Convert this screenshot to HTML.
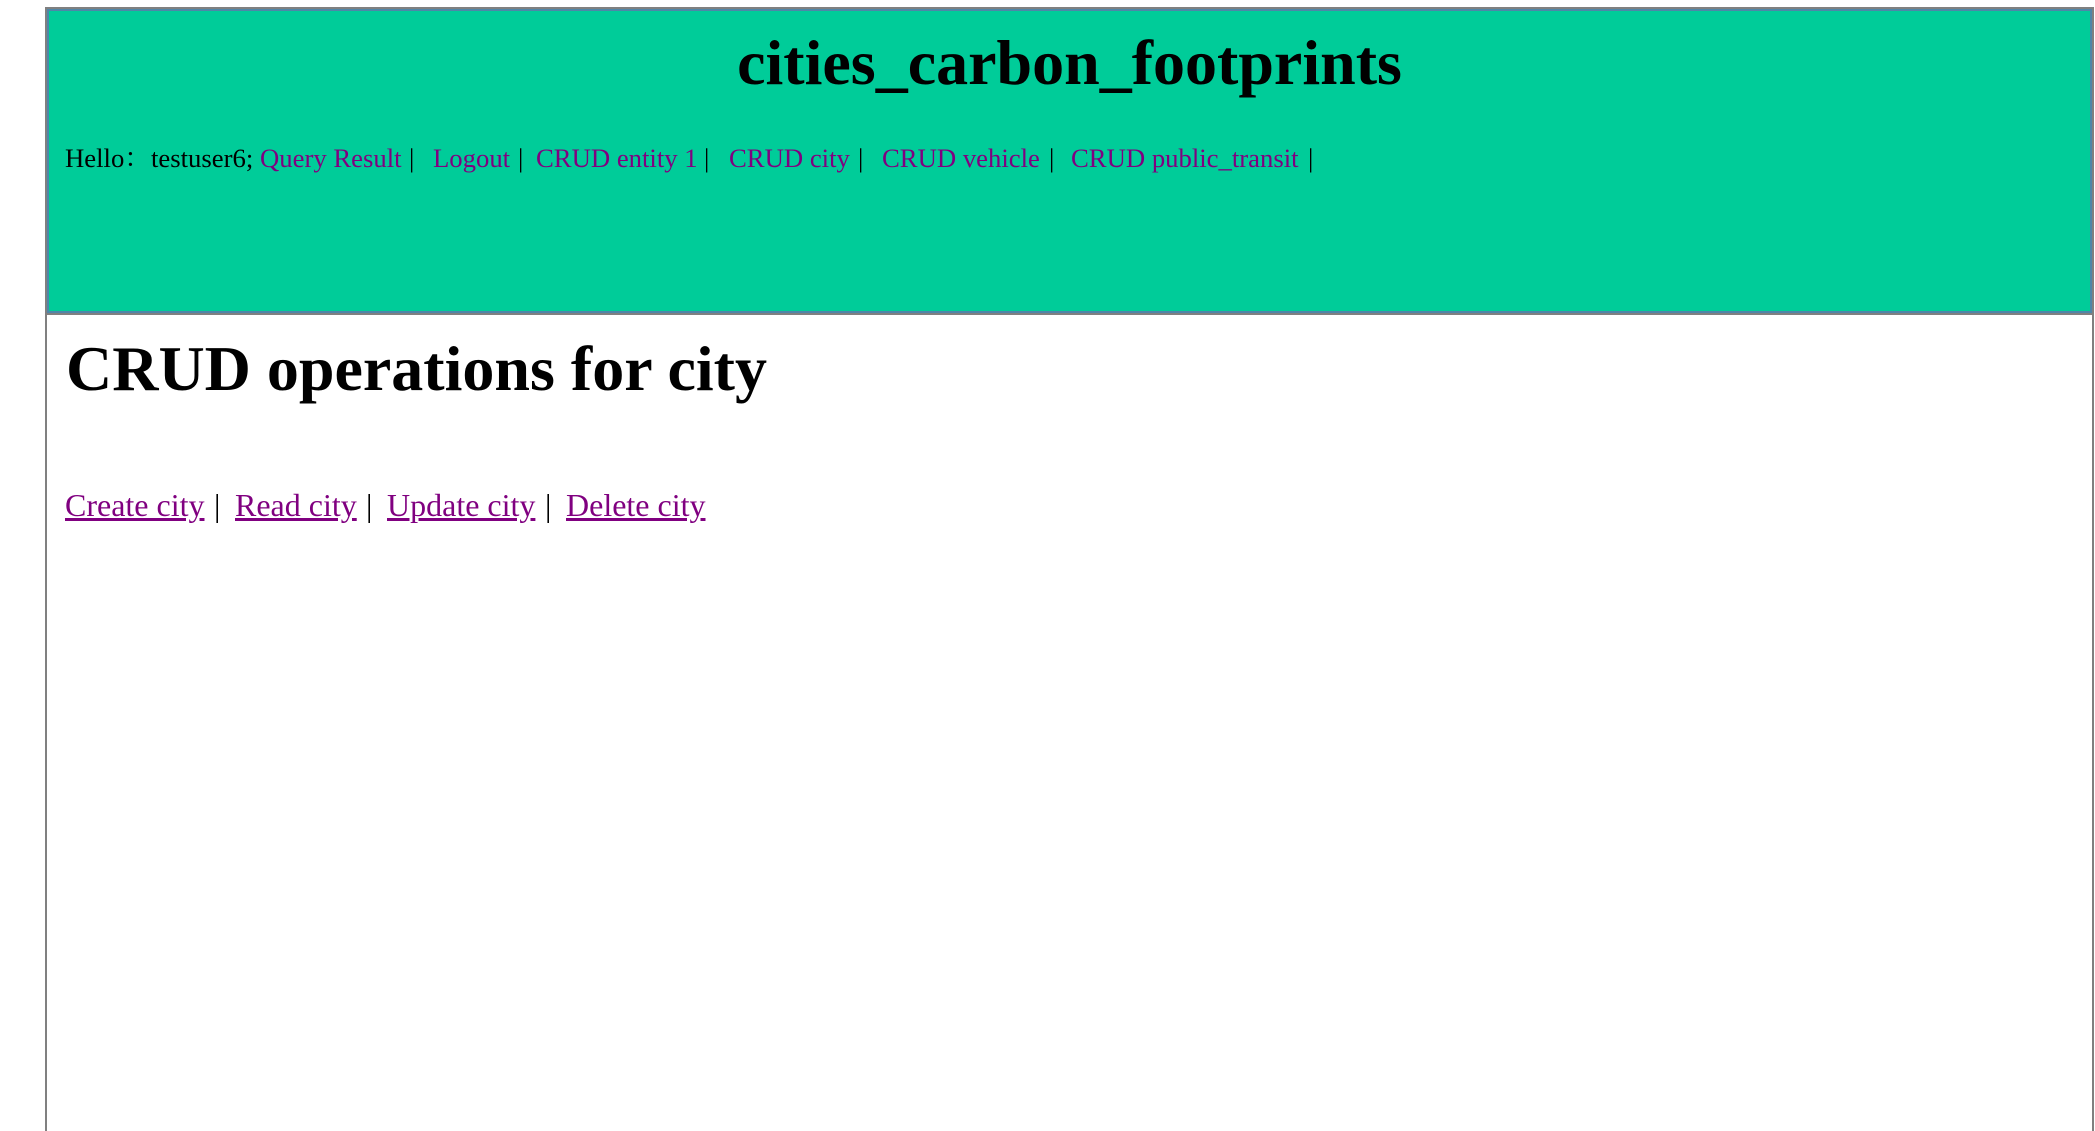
<!DOCTYPE html>
<html><head><meta charset="utf-8"><style>
html,body{margin:0;padding:0;background:#fff;width:2095px;height:1131px;overflow:hidden;position:relative;font-family:"Liberation Serif","Noto Serif CJK SC",serif;}
.hdr{position:absolute;left:45px;top:7px;width:2045px;height:304px;background:#00CC99;border:2px solid #808080;box-shadow:inset 0 0 0 2px #4f86a8;}
.vl{position:absolute;top:313px;width:2px;height:818px;background:#808080;}
.t{position:absolute;line-height:1;white-space:pre;}
a{color:#800080;text-decoration:none;}
.u{text-decoration:underline;}
</style></head><body>
<div class="hdr"></div>
<div class="vl" style="left:45px"></div>
<div class="vl" style="left:2092px"></div>
<div class="t" style="left:0;width:2139px;text-align:center;top:31px;font-size:64px;font-weight:bold">cities_carbon_footprints</div>

<div class="t" style="left:65px;top:145px;font-size:26.7px">Hello：</div>
<div class="t" style="left:151px;top:145px;font-size:26.7px">testuser6;</div>
<div class="t" style="left:260px;top:145px;font-size:26.7px"><a>Query Result</a></div>
<div class="t" style="left:409px;top:145px;font-size:26.7px">|</div>
<div class="t" style="left:433px;top:145px;font-size:26.7px"><a>Logout</a></div>
<div class="t" style="left:518px;top:145px;font-size:26.7px">|</div>
<div class="t" style="left:536px;top:145px;font-size:26.7px"><a>CRUD entity 1</a></div>
<div class="t" style="left:704px;top:145px;font-size:26.7px">|</div>
<div class="t" style="left:729px;top:145px;font-size:26.7px"><a>CRUD city</a></div>
<div class="t" style="left:858px;top:145px;font-size:26.7px">|</div>
<div class="t" style="left:882px;top:145px;font-size:26.7px"><a>CRUD vehicle</a></div>
<div class="t" style="left:1049px;top:145px;font-size:26.7px">|</div>
<div class="t" style="left:1071px;top:145px;font-size:26.7px"><a>CRUD public_transit</a></div>
<div class="t" style="left:1308px;top:145px;font-size:26.7px">|</div>

<div class="t" style="left:66px;top:337px;font-size:64px;font-weight:bold">CRUD operations for city</div>

<div class="t" style="left:65px;top:489px;font-size:32px"><a class="u">Create city</a></div>
<div class="t" style="left:214px;top:489px;font-size:32px">|</div>
<div class="t" style="left:235px;top:489px;font-size:32px"><a class="u">Read city</a></div>
<div class="t" style="left:366px;top:489px;font-size:32px">|</div>
<div class="t" style="left:387px;top:489px;font-size:32px"><a class="u">Update city</a></div>
<div class="t" style="left:545px;top:489px;font-size:32px">|</div>
<div class="t" style="left:566px;top:489px;font-size:32px"><a class="u">Delete city</a></div>
</body></html>
